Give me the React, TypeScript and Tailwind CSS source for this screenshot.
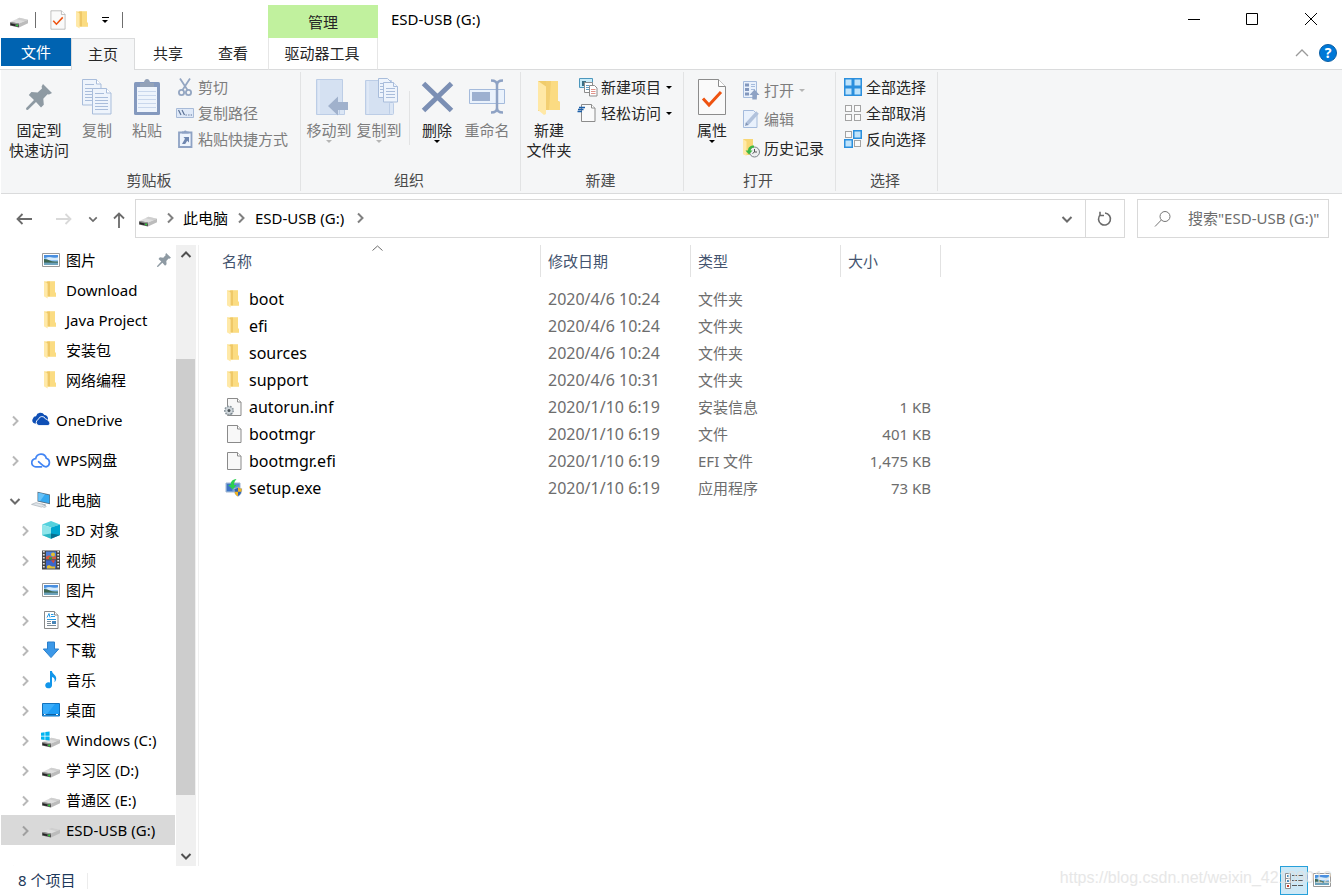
import type { ReactNode } from "react";

interface IconProps {
  className?: string;
}

/* ---------- drives, folders and files ---------- */

function DriveIcon({ windows = false }: { windows?: boolean }) {
  return (
    <svg className="w-[18px] h-[18px] shrink-0 overflow-visible" viewBox="0 0 18 18" aria-hidden="true">
      <path d="M0 11 9.500 6.800 18 8.800 9 12.600z" fill="#dedede" />
      <path d="M9.500 6.800 18 8.800l-3.500 1.500-8-2z" fill="#cfcfcf" />
      <path d="M0 11 9 12.600v4L0 14.400z" fill="#555" />
      <path d="M0 11 9 12.600v1L0 11.900z" fill="#9a9a9a" />
      <path d="M9 12.600 18 8.800v3.400L9 16.600z" fill="#bcbcbc" />
      <path d="M1 12.600 5 13.500v1.500l-4-1z" fill="#222" />
      <rect x="6.200" y="13.600" width="1.800" height="1.600" fill="#2fd13a" />
      {windows && (
        <path
          d="M-1 1.800 2.600 1.200v3.500H-1zM3.300 1.100 7.600.4v4.300H3.300zM-1 5.400h3.600v3.500L-1 8.400zM3.300 5.400h4.300v4.200L3.300 9z"
          fill="#00b4f0"
        />
      )}
    </svg>
  );
}

function FolderIcon({ className = "w-[18px] h-[18px]" }: IconProps) {
  return (
    <svg className={`${className} shrink-0`} viewBox="0 0 18 18" aria-hidden="true">
      <path d="M2 .5h11v11l1 .5v3.5H4L2 15z" fill="#f8d775" />
      <path d="M6 .5h7v11l1 .5v3.5H6z" fill="#fbdc82" />
      <path d="M5 .5h3v14.8H5z" fill="#efc867" />
      <path d="M2 .5 5.600 2.600v15L2 15.200z" fill="#ffe9a8" />
    </svg>
  );
}

function PictureIcon() {
  return (
    <svg className="w-[18px] h-[18px] shrink-0" viewBox="0 0 18 18" aria-hidden="true">
      <path d="M.5 2.500h17v13H.5z" fill="#fff" stroke="#9a9a9a" />
      <path d="M2 4h14v10H2z" fill="#8fc3f2" />
      <path d="M2 4h14v2.500C11 8 8 5 2 7z" fill="#4a8fe0" />
      <path d="M4 7c3-2 6 .5 12-.6V9H6z" fill="#d8ecfb" />
      <path d="M2 8c3 0 5 1.600 8 2.200 2 .3 4 .4 6 .4V12H2z" fill="#3d6650" />
      <path d="M2 11.600h14V14H2z" fill="#6da3bd" />
    </svg>
  );
}

function PageIcon({ gear = false }: { gear?: boolean }) {
  return (
    <svg className="w-[18px] h-[18px] shrink-0 overflow-visible" viewBox="0 0 18 18" aria-hidden="true">
      <path d="M2.500.5h10L16 4v13.500H2.500z" fill="#f8f8f8" stroke="#8a8a8a" />
      <path d="M12.500.5V4H16" fill="#fff" stroke="#8a8a8a" />
      {gear && (
        <g>
          <circle cx="4" cy="12.500" r="4.200" fill="#c3cbd0" stroke="#8b969d" strokeWidth="1.600" strokeDasharray="1.600 1.300" />
          <circle cx="4" cy="12.500" r="3" fill="#cfd6da" />
          <circle cx="4" cy="12.500" r="1.500" fill="#4d565c" />
          <path d="M5 16.500l2.500-1.500" stroke="#77828a" />
        </g>
      )}
    </svg>
  );
}

function SetupIcon() {
  return (
    <svg className="w-[18px] h-[18px] shrink-0" viewBox="0 0 18 18" aria-hidden="true">
      <path d="M1 4h14v9H1z" fill="#5b8fd6" stroke="#9fb4cf" />
      <path d="M2 5h5v7H2z" fill="#3f74c4" />
      <path d="M11.500 0C7 .5 5.500 3 5.800 6H3.200l4.600 4.500L11.500 6H9c0-2.500.8-4 2.500-6z" fill="#2bd14f" />
      <path d="M9 9.500c1.800 0 3-.6 4-1.500 1 .9 2.200 1.500 4 1.500 0 4-1 6.500-4 8-3-1.500-4-4-4-8z" fill="#2f62b0" stroke="#d7dde4" strokeWidth=".6" />
      <path d="M13 8.300c1 .9 2.100 1.300 3.700 1.400 0 1.100-.1 2.100-.4 3H13zM13 12.700v4.500c-2-1-3-2.500-3.400-4.500z" fill="#f3b51f" />
    </svg>
  );
}

/* ---------- navigation tree ---------- */

function OneDriveIcon() {
  return (
    <svg className="w-[18px] h-[18px] shrink-0" viewBox="0 0 18 18" aria-hidden="true">
      <path d="M3 12.500A3 3 0 0 1 1 7.600 3 3 0 0 1 4 5.200 4.600 4.600 0 0 1 12.400 4 4 4 0 0 1 16 7.500v5z" fill="#0f4fb5" />
      <path d="M7 14.600A3.200 3.200 0 0 1 6.400 8.400 3.700 3.700 0 0 1 13.500 8a2.800 2.800 0 0 1 2.700 1.800 2.500 2.500 0 0 1-.2 4.800z" fill="#0f4fb5" stroke="#fff" strokeWidth=".9" />
    </svg>
  );
}

function WpsCloudIcon() {
  return (
    <svg className="w-[20px] h-[18px] -mx-px shrink-0" viewBox="0 0 20 18" fill="none" stroke="#4285f4" strokeWidth="1.700" aria-hidden="true">
      <path d="M10.500 15.800H5A4.100 4.100 0 0 1 4.700 7.600 5.400 5.400 0 0 1 15.300 7.300a4.400 4.400 0 0 1-.3 8.500c-3.200 0-4.600-3-7.400-5.100" strokeLinecap="round" />
    </svg>
  );
}

function ComputerIcon() {
  return (
    <svg className="w-[20px] h-[18px] -mx-px shrink-0" viewBox="0 0 20 18" aria-hidden="true">
      <path d="M6.500.8 19 3.400v9.800L6.500 10.500z" fill="#5a6f80" />
      <path d="M7.300 1.800 18.300 4.200v8L7.300 9.800z" fill="#35a9f0" />
      <path d="M7.300 1.800 14 3.200 9 10.200 7.300 9.800z" fill="#68c2f7" />
      <path d="M10.500 12.500l4 .9v1.500l-4-.9z" fill="#8796a3" />
      <path d="M.5 13.400 5 11.600l9.500 2.500-4 2z" fill="#dfe4e8" stroke="#aab3ba" strokeWidth=".7" />
      <path d="M11.500 16.200l3-1.300 1.500.7-2.500 1.400z" fill="#c3cad0" />
    </svg>
  );
}

function CubeIcon() {
  return (
    <svg className="w-[18px] h-[18px] shrink-0" viewBox="0 0 18 18" aria-hidden="true">
      <path d="M9 0 18 3.500 9 6.500 0 3.500z" fill="#54d1dd" />
      <path d="M0 3.500 9 6.500V17.800L0 14z" fill="#8fe5ea" />
      <path d="M9 6.500 18 3.500V14L9 17.800z" fill="#00a6cf" />
      <path d="M9 12.500 0 14l9 3.800z" fill="#2bb6c4" />
      <path d="M9 12.500 18 14l-9 3.800z" fill="#056f91" />
    </svg>
  );
}

function VideoIcon() {
  return (
    <svg className="w-[18px] h-[20px] shrink-0" viewBox="0 0 18 20" aria-hidden="true">
      <path d="M0 .5h18v19H0z" fill="#444" />
      <path d="M1.800 1v18M16.200 1v18" stroke="#e4e4e4" strokeWidth="1.800" strokeDasharray="1.600 1.400" />
      <path d="M4 1.500h10v7.800H4z" fill="#4e7fd8" />
      <path d="M4 10.300h10v8.200H4z" fill="#3c66c9" />
      <path d="M4 6.800l3-1.500 3 2 4-1.300v3.300H4z" fill="#d65a3c" />
      <circle cx="11" cy="4.500" r="2" fill="#e5c12d" />
      <path d="M5 16l2-1 3 1.500h3v2H5z" fill="#e5c12d" />
      <path d="M9 10.300h4l-1.500 3z" fill="#d64a33" />
      <path d="M7 7.300h3v2H7z" fill="#2f9e44" />
    </svg>
  );
}

function DocumentIcon() {
  return (
    <svg className="w-[18px] h-[18px] shrink-0" viewBox="0 0 18 18" aria-hidden="true">
      <path d="M2.500.5h10L16 4v13.500H2.500z" fill="#fff" stroke="#8a8a8a" />
      <path d="M12.500.5V4H16" fill="#fff" stroke="#8a8a8a" />
      <path d="M5 6.500 7 2.500l1 4M9 3.500h2.500M9 5.500h4M5 8.500h9" stroke="#2499e6" fill="none" />
      <path d="M5 10.500h4M5 12.500h4M5 14.500h9" stroke="#7d8b96" />
      <path d="M10 10h4v3h-4z" fill="#4a86b8" />
    </svg>
  );
}

function DownloadIcon() {
  return (
    <svg className="w-[18px] h-[18px] shrink-0" viewBox="0 0 18 18" aria-hidden="true">
      <path d="M5.500 1h7v7h4.200L9 16.600 1.300 8h4.200z" fill="#3b98e8" stroke="#2a7fcb" />
    </svg>
  );
}

function MusicIcon() {
  return (
    <svg className="w-[18px] h-[18px] shrink-0" viewBox="0 0 18 18" aria-hidden="true">
      <path d="M8 0h2c0 3 4.800 4 4.200 8-.2 1.600-1 2.600-1.800 3.300.8-2.500.3-4.600-2.400-5.300v8.500a3.400 3 0 1 1-2-2.900z" fill="#1296ea" />
    </svg>
  );
}

function DesktopIcon() {
  return (
    <svg className="w-[18px] h-[18px] shrink-0" viewBox="0 0 18 18" aria-hidden="true">
      <path d="M.5 2.500h17V15H.5z" fill="#1e9df5" stroke="#1272bd" />
      <path d="M1 3h12L5 13H1z" fill="#3badfa" />
      <path d="M1 13.500h16" stroke="#0f5f9e" />
      <path d="M2 13.500h1.500M14 13.500h2" stroke="#fff" />
    </svg>
  );
}

function PinIcon({ className = "w-[14px] h-[14px]" }: IconProps) {
  return (
    <svg className={`${className} shrink-0`} viewBox="0 0 26 26" fill="#8e9aa3" aria-hidden="true">
      <path d="M17 0 26 9l-3 1.500-1.500-.3-4.200 4.600.5 6L15 23.500 10 18 1.800 26 0 25.500.2 24 8 16 2.800 11l2.600-3 6.200.6 4.400-4.200-.4-2z" />
    </svg>
  );
}

function Chevron({ dir, className = "" }: { dir: "right" | "down" | "up"; className?: string }) {
  const paths = {
    right: "M4 1.500 8.500 6 4 10.500",
    down: "M1.500 4 6 8.500 10.500 4",
    up: "M1.500 8 6 3.500 10.500 8",
  };
  return (
    <svg className={`w-3 h-3 shrink-0 ${className}`} viewBox="0 0 12 12" fill="none" stroke="currentColor" strokeWidth="2" aria-hidden="true">
      <path d={paths[dir]} />
    </svg>
  );
}

function Caret({ className = "" }: IconProps) {
  return (
    <svg className={`w-[6px] h-[3px] shrink-0 ${className}`} viewBox="0 0 6 3" fill="currentColor" aria-hidden="true">
      <path d="M0 0h6L3 3z" />
    </svg>
  );
}

/* ---------- ribbon ---------- */

function SheetLines({ x, y }: { x: number; y: number }) {
  return (
    <g transform={`translate(${x} ${y})`}>
      <path d="M.5.5h14L19 5v21H.5z" fill="#eef4fc" stroke="#a9bddb" />
      <path d="M14.500.5V5H19" fill="#fff" stroke="#a9bddb" />
      <path d="M3 5.500h9M3 9.500h13M3 12.500h13M3 15.500h13M3 18.500h13M3 21.500h13" stroke="#a9bddb" />
    </g>
  );
}

function CopyIcon() {
  return (
    <svg className="w-[32px] h-[38px]" viewBox="0 0 32 38" aria-hidden="true">
      <SheetLines x={1} y={1} />
      <SheetLines x={11} y={10} />
    </svg>
  );
}

function PasteIcon() {
  return (
    <svg className="w-[28px] h-[38px]" viewBox="0 0 28 38" aria-hidden="true">
      <rect x="1" y="4" width="26" height="33" rx="1.500" fill="#8499be" />
      <path d="M4 9h20v25H4z" fill="#eef4fc" />
      <path d="M5 13.500h18M5 17.500h18M5 21.500h18M5 25.500h18M5 29.500h18" stroke="#c9d7ec" />
      <path d="M7 9V5h4a3 3 0 0 1 6 0h4v4z" fill="#93a2b8" />
      <circle cx="14" cy="3.500" r="2.500" fill="#93a2b8" />
    </svg>
  );
}

function MoveToIcon() {
  return (
    <svg className="w-[38px] h-[38px]" viewBox="-4 0 38 38" aria-hidden="true">
      <path d="M2.500 1.500h26v35h-26z" fill="#d5e1f2" stroke="#bccde6" />
      <path d="M5 2v34" stroke="#e8effa" />
      <path d="M25.500 36.500V26h5v10.500z" fill="#dbe6f5" stroke="#bccde6" />
      <path d="M14 28 24 18.500V24h10v8H24v5.500z" fill="#a0b1cc" />
    </svg>
  );
}

function CopyToIcon() {
  return (
    <svg className="w-[40px] h-[38px]" viewBox="-6 0 40 38" aria-hidden="true">
      <path d="M.5 2.500h26v34H.5z" fill="#d5e1f2" stroke="#bccde6" />
      <path d="M3 3v33" stroke="#e8effa" />
      <rect x="24.500" y="24.500" width="4" height="12" rx="1" fill="#dbe6f5" stroke="#bccde6" />
      <g fill="#eef4fc" stroke="#a9bddb">
        <path d="M13.500.5h9l4 4v15h-13z" />
        <path d="M18.500 4.500h10l4 4V24h-14z" />
        <path d="M15 5.500h3M15 8.500h3M15 11.500h3M15 14.500h3M21 10.500h9M21 13.500h9M21 16.500h9M21 19.500h9M28.500 4.500v4h4" />
      </g>
    </svg>
  );
}

function DeleteIcon() {
  return (
    <svg className="w-[34px] h-[38px]" viewBox="0 0 34 38" aria-hidden="true">
      <path d="M3.500 5.500 31.500 32.500M31.500 5.500 3.500 32.500" stroke="#7b8fb4" strokeWidth="5" />
    </svg>
  );
}

function RenameIcon() {
  return (
    <svg className="w-[38px] h-[38px]" viewBox="0 0 38 38" aria-hidden="true">
      <path d="M1.500 11.500h35v14h-35z" fill="#eaf2fc" stroke="#a5bbdc" />
      <path d="M4 14h18v9H4z" fill="#9db0d0" />
      <path d="M23 2.500c4 0 6 1.500 6 4.500 0-3 2-4.500 6-4.500M29 6v24M23 34.500c4 0 6-1.500 6-4.500 0 3 2 4.500 6 4.500" fill="none" stroke="#8ea2c4" strokeWidth="2.500" />
    </svg>
  );
}

function PropertiesIcon({ className }: IconProps) {
  return (
    <svg className={className} viewBox="0 0 30 38" aria-hidden="true">
      <path d="M1.500 1.500h20l7 7v28h-27z" fill="#fafafa" stroke="#8c8c8c" />
      <path d="M21.500 1.500v7h7" fill="#fff" stroke="#8c8c8c" />
      <path d="M6 20.500 12 27 24 14" fill="none" stroke="#ee5311" strokeWidth="3" />
    </svg>
  );
}

function BigFolderIcon() {
  return (
    <svg className="w-[28px] h-[38px]" viewBox="0 0 28 38" aria-hidden="true">
      <path d="M3 3h20v20l2 1v8H9L3 33z" fill="#f0cc6c" />
      <path d="M11 3h12v20l2 1v8H11z" fill="#fbdb82" />
      <path d="M11 3h5l-2 29h-3z" fill="#f3cf72" />
      <path d="M3 3l8 5.500V36l-2 1-6-5z" fill="#ffe8a6" />
    </svg>
  );
}

function CutIcon() {
  return (
    <svg className="w-[18px] h-[20px]" viewBox="0 0 18 20" fill="none" stroke="#94a6c2" strokeWidth="1.800" aria-hidden="true">
      <path d="M4 1.500 11.500 13M14 1.500 6.500 13" />
      <circle cx="5.500" cy="15.500" r="2.600" />
      <circle cx="12.500" cy="15.500" r="2.600" />
    </svg>
  );
}

function CopyPathIcon() {
  return (
    <svg className="w-[18px] h-[18px]" viewBox="0 0 18 18" aria-hidden="true">
      <path d="M.5 4.500h17v9H.5z" fill="#dfe9f8" stroke="#a8bbd8" />
      <path d="M2.500 6l2.500 5M6 6l2.500 5M9.500 11h1.300M12.200 11h1.300M14.700 11H16" stroke="#5d7397" strokeWidth="1.200" />
    </svg>
  );
}

function PasteShortcutIcon() {
  return (
    <svg className="w-[18px] h-[20px]" viewBox="0 0 18 20" aria-hidden="true">
      <path d="M3 3.500h12.500V18H3z" fill="#eef4fc" stroke="#8ea2c4" strokeWidth="1.800" />
      <path d="M6 4.500V2.500h1.800a1.600 1.600 0 0 1 3 0h1.800v2z" fill="#8ea2c4" />
      <path d="M7.500 8H13v5.500l-1.800-1.800-2 3.300H6l3-5.200z" fill="#6f87b0" />
    </svg>
  );
}

function NewItemIcon() {
  return (
    <svg className="w-[20px] h-[20px]" viewBox="0 0 20 20" aria-hidden="true">
      <path d="M.5 1.500h13v9H.5z" fill="#c9ecf9" stroke="#4c97bd" />
      <path d="M3 4h4v5H3z" fill="#3a6f84" />
      <path d="M5.500 5.500h8v10h-8z" fill="#fff" stroke="#8c8c8c" />
      <path d="M7 8.500h3M7 10.500h3M7 12.500h3" stroke="#5f9fc6" />
      <path d="M10.500 8.500h5L18 11v8h-7.500z" fill="#fff" stroke="#8c8c8c" />
      <path d="M12 12.500h4.500M12 14.500h4.500M12 16.500h4.500" stroke="#e0938a" />
    </svg>
  );
}

function EasyAccessIcon() {
  return (
    <svg className="w-[20px] h-[20px] overflow-visible" viewBox="0 0 20 20" aria-hidden="true">
      <path d="M2.500 1.500h10L16 5v13.500H2.500z" fill="#fafafa" stroke="#8c8c8c" />
      <path d="M12.500 1.500V5H16" fill="#fff" stroke="#8c8c8c" />
      <path d="M0 4.500h6M-1 6.500h5.500M-1.500 8.500h4.500" stroke="#1d5fa8" strokeWidth="1.300" />
    </svg>
  );
}

function OpenIcon() {
  return (
    <svg className="w-[18px] h-[20px]" viewBox="0 0 18 20" aria-hidden="true">
      <path d="M1.500 1.500h13v16h-13z" fill="#e9f1fc" stroke="#a5bbdc" />
      <path d="M3 3.500h4v3H3zM3 8h4v3H3zM3 12.500h4v3H3z" fill="#8297bd" />
      <path d="M9 4.500h4M9 6.500h4M9 9.500h4" stroke="#a5bbdc" />
      <path d="M12.500 9.500 17.500 15h-2.700v4.500h-4.500V15H7.500z" fill="#8ea2c4" />
    </svg>
  );
}

function EditIcon() {
  return (
    <svg className="w-[18px] h-[20px]" viewBox="0 0 18 20" aria-hidden="true">
      <path d="M1.500 1.500h10L15 5v13.500H1.500z" fill="#e9f1fc" stroke="#a5bbdc" />
      <path d="M4.500 15.500 15.500 3.500" stroke="#b1c2dc" strokeWidth="3.500" />
      <path d="M3 17l1-3.500 2.300 2.200z" fill="#7f93b5" />
    </svg>
  );
}

function HistoryIcon() {
  return (
    <svg className="w-[18px] h-[20px]" viewBox="0 0 18 20" aria-hidden="true">
      <path d="M1 1h10v11l1 .5V17H4l-3-1z" fill="#f8d775" />
      <path d="M1 1l3.500 2.500V18L1 16z" fill="#ffe9a8" />
      <circle cx="12.500" cy="14" r="5" fill="#eceeef" stroke="#7b8288" />
      <path d="M12.500 11v3H15M12.500 14l-2 1.500" stroke="#555" fill="none" />
      <path d="M12 7.500C8 7.500 6 9.500 6 12.500H3.500L7 16.500l3.500-4h-2c0-2 1.500-3 3.500-3z" fill="#3cb844" />
    </svg>
  );
}

type SelectMode = "all" | "none" | "invert";

function SelectIcon({ mode }: { mode: SelectMode }) {
  const cells = [
    { x: 0, y: 0, on: mode === "all" },
    { x: 9, y: 0, on: mode !== "none" },
    { x: 0, y: 9, on: mode !== "none" },
    { x: 9, y: 9, on: mode === "all" },
  ];
  return (
    <svg className="w-[18px] h-[18px]" viewBox="0 0 18 18" aria-hidden="true">
      {cells.map(({ x, y, on }) =>
        on ? (
          <rect key={`${x}-${y}`} x={x + 0.75} y={y + 0.75} width="7.500" height="7.500" fill="#bfe3fb" stroke="#2b8fdd" strokeWidth="1.500" />
        ) : (
          <rect key={`${x}-${y}`} x={x + 1.5} y={y + 1.5} width="6" height="6" fill="#fafafa" stroke="#a3a3a3" />
        )
      )}
    </svg>
  );
}

interface RibbonButtonProps {
  icon: ReactNode;
  label: string;
  disabled?: boolean;
  caret?: boolean;
}

function LargeButton({ icon, label, disabled, caret, width = "w-[50px]" }: RibbonButtonProps & { width?: string }) {
  return (
    <button
      type="button"
      disabled={disabled}
      className={`${width} flex flex-col items-center text-[15px] leading-5 whitespace-pre-line ${disabled ? "text-[#7d7d7d]" : "text-[#262626]"}`}
    >
      <span className="h-[46px] flex items-center justify-center">{icon}</span>
      {label}
      {caret && <Caret className={disabled ? "text-[#b5b5b5]" : "text-black"} />}
    </button>
  );
}

function SmallButton({ icon, label, disabled, caret }: RibbonButtonProps) {
  return (
    <button
      type="button"
      disabled={disabled}
      className={`h-[26px] flex items-center text-[15px] leading-5 whitespace-nowrap ${disabled ? "text-[#7d7d7d]" : "text-[#262626]"}`}
    >
      <span className="w-[22px] flex items-center">{icon}</span>
      {label}
      {caret && <Caret className={`ml-[5px] ${disabled ? "text-[#b5b5b5]" : "text-black"}`} />}
    </button>
  );
}

function RibbonGroup({ title, className, children }: { title: string; className: string; children: ReactNode }) {
  return (
    <section aria-label={title} className={`${className} shrink-0 flex flex-col border-r border-[#e2e3e4] my-[2px]`}>
      <div className="flex-1 flex items-start pt-[2px]">{children}</div>
      <div className="h-[21px] pr-[3px] text-center text-[15px] leading-5 text-[#4a4a4a]">{title}</div>
    </section>
  );
}

/* ---------- data ---------- */

interface TreeItem {
  label: string;
  icon: ReactNode;
  level: 0 | 1;
  arrow?: "right" | "down";
  pinned?: boolean;
  selected?: boolean;
  spaced?: boolean;
}

const TREE: TreeItem[] = [
  { label: "图片", icon: <PictureIcon />, level: 1, pinned: true },
  { label: "Download", icon: <FolderIcon />, level: 1 },
  { label: "Java Project", icon: <FolderIcon />, level: 1 },
  { label: "安装包", icon: <FolderIcon />, level: 1 },
  { label: "网络编程", icon: <FolderIcon />, level: 1 },
  { label: "OneDrive", icon: <OneDriveIcon />, level: 0, arrow: "right", spaced: true },
  { label: "WPS网盘", icon: <WpsCloudIcon />, level: 0, arrow: "right", spaced: true },
  { label: "此电脑", icon: <ComputerIcon />, level: 0, arrow: "down", spaced: true },
  { label: "3D 对象", icon: <CubeIcon />, level: 1, arrow: "right" },
  { label: "视频", icon: <VideoIcon />, level: 1, arrow: "right" },
  { label: "图片", icon: <PictureIcon />, level: 1, arrow: "right" },
  { label: "文档", icon: <DocumentIcon />, level: 1, arrow: "right" },
  { label: "下载", icon: <DownloadIcon />, level: 1, arrow: "right" },
  { label: "音乐", icon: <MusicIcon />, level: 1, arrow: "right" },
  { label: "桌面", icon: <DesktopIcon />, level: 1, arrow: "right" },
  { label: "Windows (C:)", icon: <DriveIcon windows />, level: 1, arrow: "right" },
  { label: "学习区 (D:)", icon: <DriveIcon />, level: 1, arrow: "right" },
  { label: "普通区 (E:)", icon: <DriveIcon />, level: 1, arrow: "right" },
  { label: "ESD-USB (G:)", icon: <DriveIcon />, level: 1, arrow: "right", selected: true },
  { label: "ESD-USB (G:)", icon: <DriveIcon />, level: 0, arrow: "right", spaced: true },
];

const FILES = [
  { name: "boot", date: "2020/4/6 10:24", type: "文件夹", size: "", icon: <FolderIcon /> },
  { name: "efi", date: "2020/4/6 10:24", type: "文件夹", size: "", icon: <FolderIcon /> },
  { name: "sources", date: "2020/4/6 10:24", type: "文件夹", size: "", icon: <FolderIcon /> },
  { name: "support", date: "2020/4/6 10:31", type: "文件夹", size: "", icon: <FolderIcon /> },
  { name: "autorun.inf", date: "2020/1/10 6:19", type: "安装信息", size: "1 KB", icon: <PageIcon gear /> },
  { name: "bootmgr", date: "2020/1/10 6:19", type: "文件", size: "401 KB", icon: <PageIcon /> },
  { name: "bootmgr.efi", date: "2020/1/10 6:19", type: "EFI 文件", size: "1,475 KB", icon: <PageIcon /> },
  { name: "setup.exe", date: "2020/1/10 6:19", type: "应用程序", size: "73 KB", icon: <SetupIcon /> },
];

/* ---------- page parts ---------- */

function TitleBar() {
  return (
    <header className="flex h-[70px] shrink-0">
      <div className="w-[268px] shrink-0 flex flex-col">
        <div className="h-[38px] flex items-center pl-[10px] pt-px">
          <DriveIcon />
          <span className="w-px h-4 bg-[#6e6e6e] ml-[7px]" />
          <button type="button" aria-label="属性" className="ml-[14px]">
            <PropertiesIcon className="w-4 h-[20px]" />
          </button>
          <button type="button" aria-label="新建文件夹" className="ml-2">
            <FolderIcon />
          </button>
          <button type="button" aria-label="自定义快速访问工具栏" className="ml-[9px] w-2 flex flex-col items-center gap-[2px]">
            <span className="w-[7px] h-px bg-black" />
            <Caret />
          </button>
          <span className="w-px h-4 bg-[#6e6e6e] ml-[13px]" />
        </div>
        <nav className="flex-1 flex text-[15px] leading-5 text-[#262626]">
          <div className="w-[71px] pl-px border-b border-[#dadbdc]">
            <button type="button" className="w-full h-[28px] bg-[#0063b1] text-white">文件</button>
          </div>
          <button type="button" className="w-[64px] pb-[2px] bg-[#f5f6f7] border border-b-0 border-[#dadbdc]">主页</button>
          <button type="button" className="w-[66px] pb-px border-b border-[#dadbdc]">共享</button>
          <button type="button" className="flex-1 pr-[3px] pb-px border-b border-[#dadbdc]">查看</button>
        </nav>
      </div>

      <div className="w-[110px] shrink-0 flex flex-col pt-[5px] text-[15px] leading-5 text-[#262626]">
        <div className="h-[33px] flex items-center justify-center bg-[#c1f19e]">管理</div>
        <button type="button" className="flex-1 pr-[2px] pb-px border-x border-b border-x-[#e6e6e6] border-b-[#dadbdc]">驱动器工具</button>
      </div>

      <div className="flex-1 flex flex-col border-b border-[#dadbdc]">
        <div className="h-[38px] flex items-center pl-[13px] pr-px">
          <h1 className="flex-1 text-[15px] leading-5 text-black">ESD-USB (G:)</h1>
          <button type="button" aria-label="最小化" className="w-[58px] h-full flex items-center justify-center">
            <svg className="w-3 h-3" viewBox="0 0 12 12" stroke="#000"><path d="M0 6.500h12" /></svg>
          </button>
          <button type="button" aria-label="最大化" className="w-[58px] h-full flex items-center justify-center">
            <svg className="w-3 h-3" viewBox="0 0 12 12" fill="none" stroke="#000"><path d="M.5.5h11v11H.5z" /></svg>
          </button>
          <button type="button" aria-label="关闭" className="w-[60px] h-full flex items-center justify-center">
            <svg className="w-3 h-3" viewBox="0 0 12 12" stroke="#000"><path d="M0 0l12 12M12 0 0 12" /></svg>
          </button>
        </div>
        <div className="flex-1 flex items-center justify-end gap-[10px] pr-[5px] pb-[2px]">
          <button type="button" aria-label="最小化功能区">
            <svg className="w-[14px] h-2" viewBox="0 0 14 8" fill="none" stroke="#9a9a9a" strokeWidth="1.300"><path d="M1 7l6-6 6 6" /></svg>
          </button>
          <button type="button" aria-label="帮助" className="w-[18px] h-[18px] rounded-full bg-[#0078d7] border border-[#0b5fa5] text-white text-[14px] leading-4 font-bold">?</button>
        </div>
      </div>
    </header>
  );
}

function Ribbon() {
  return (
    <div className="h-[124px] shrink-0 flex bg-[#f5f6f7] border-b border-[#dadbdc] ml-px overflow-hidden">
      <RibbonGroup title="剪贴板" className="w-[300px]">
        <div className="flex pl-[3px]">
          <LargeButton icon={<PinIcon className="w-[26px] h-[26px]" />} label={"固定到\n快速访问"} width="w-[70px]" />
          <LargeButton icon={<CopyIcon />} label="复制" disabled width="w-[46px]" />
          <LargeButton icon={<PasteIcon />} label="粘贴" disabled width="w-[54px]" />
        </div>
        <div className="pl-[2px]">
          <SmallButton icon={<CutIcon />} label="剪切" disabled />
          <SmallButton icon={<CopyPathIcon />} label="复制路径" disabled />
          <SmallButton icon={<PasteShortcutIcon />} label="粘贴快捷方式" disabled />
        </div>
      </RibbonGroup>

      <RibbonGroup title="组织" className="w-[220px]">
        <div className="flex pl-[3px]">
          <LargeButton icon={<MoveToIcon />} label="移动到" disabled caret />
          <LargeButton icon={<CopyToIcon />} label="复制到" disabled caret />
          <span className="w-px h-[54px] mt-[17px] ml-[5px] mr-[2px] bg-[#e2e3e4]" />
          <LargeButton icon={<DeleteIcon />} label="删除" caret />
          <LargeButton icon={<RenameIcon />} label="重命名" disabled />
        </div>
      </RibbonGroup>

      <RibbonGroup title="新建" className="w-[163px]">
        <div className="flex pl-[3px]">
          <LargeButton icon={<BigFolderIcon />} label={"新建\n文件夹"} />
        </div>
        <div className="pl-[5px]">
          <SmallButton icon={<NewItemIcon />} label="新建项目" caret />
          <SmallButton icon={<EasyAccessIcon />} label="轻松访问" caret />
        </div>
      </RibbonGroup>

      <RibbonGroup title="打开" className="w-[152px]">
        <div className="flex pl-[3px]">
          <LargeButton icon={<PropertiesIcon className="w-[30px] h-[38px]" />} label="属性" caret />
        </div>
        <div className="pl-[5px] pt-[3px] flex flex-col gap-[3px]">
          <SmallButton icon={<OpenIcon />} label="打开" disabled caret />
          <SmallButton icon={<EditIcon />} label="编辑" disabled />
          <SmallButton icon={<HistoryIcon />} label="历史记录" />
        </div>
      </RibbonGroup>

      <RibbonGroup title="选择" className="w-[102px]">
        <div className="pl-2">
          <SmallButton icon={<SelectIcon mode="all" />} label="全部选择" />
          <SmallButton icon={<SelectIcon mode="none" />} label="全部取消" />
          <SmallButton icon={<SelectIcon mode="invert" />} label="反向选择" />
        </div>
      </RibbonGroup>
    </div>
  );
}

function AddressBar() {
  return (
    <div className="h-[51px] shrink-0 flex items-start pt-[5px] pr-[13px]">
      <div className="w-[135px] h-[39px] shrink-0 flex items-center pl-[16px] text-[#6b6b6b]">
        <button type="button" aria-label="后退">
          <svg className="w-4 h-3" viewBox="0 0 16 12" fill="none" stroke="currentColor" strokeWidth="1.800"><path d="M16 6H1.500M6.500 1l-5 5 5 5" /></svg>
        </button>
        <button type="button" aria-label="前进" className="ml-[24px] text-[#d9d9d9]">
          <svg className="w-4 h-3" viewBox="0 0 16 12" fill="none" stroke="currentColor" strokeWidth="1.800"><path d="M0 6h14.500M9.500 1l5 5-5 5" /></svg>
        </button>
        <button type="button" aria-label="最近浏览的位置" className="ml-[16px]">
          <Chevron dir="down" className="w-[10px] h-[10px]" />
        </button>
        <button type="button" aria-label="上移" className="ml-[15px] pt-[2px]">
          <svg className="w-3 h-4" viewBox="0 0 12 16" fill="none" stroke="currentColor" strokeWidth="1.800"><path d="M6 16V1.500M1 6.500l5-5 5 5" /></svg>
        </button>
      </div>

      <div className="flex-1 h-[39px] flex border border-[#d9d9d9]">
        <div className="flex-1 flex items-center pl-[3px] pb-[2px] text-[15px] leading-5 text-black">
          <span className="pt-[2px]"><DriveIcon /></span>
          <Chevron dir="right" className="ml-[7px] text-[#808080]" />
          <button type="button" className="ml-[7px]">此电脑</button>
          <Chevron dir="right" className="ml-[7px] text-[#808080]" />
          <button type="button" className="ml-2">ESD-USB (G:)</button>
          <Chevron dir="right" className="ml-[10px] text-[#808080]" />
        </div>
        <button type="button" aria-label="以前的位置" className="w-[36px] flex items-center justify-center text-[#6b6b6b]">
          <Chevron dir="down" />
        </button>
        <button type="button" aria-label="刷新" className="w-[39px] flex items-center justify-center border-l border-[#d9d9d9]">
          <svg className="w-4 h-4" viewBox="0 0 16 16" fill="none" stroke="#6b6b6b" strokeWidth="1.600"><path d="M3.500 3.500A6 6 0 1 0 8 2M3 .8V4.500h4" /></svg>
        </button>
      </div>

      <div className="w-[192px] h-[39px] ml-3 shrink-0 flex items-center border border-[#d9d9d9] pl-[16px]">
        <svg className="w-[18px] h-[18px] shrink-0" viewBox="0 0 18 18" fill="none" stroke="#767676" aria-hidden="true">
          <circle cx="11" cy="6.500" r="5" />
          <path d="M7.300 10 1 16.500" />
        </svg>
        <input
          type="text"
          aria-label="搜索"
          placeholder={'搜索"ESD-USB (G:)"'}
          className="flex-1 min-w-0 ml-4 pb-[2px] text-[15px] leading-5 outline-none placeholder:text-[#6d6d6d]"
        />
      </div>
    </div>
  );
}

function TreeRow({ item }: { item: TreeItem }) {
  return (
    <li className={item.spaced ? "mt-[10px]" : ""}>
      <button
        type="button"
        className={`w-full h-[30px] flex items-center text-[15px] leading-5 text-black whitespace-nowrap ${item.level === 0 ? "pl-2" : "pl-[18px]"} ${item.selected ? "bg-[#d9d9d9]" : ""}`}
      >
        <span className="w-[23px] shrink-0 flex items-center pt-px">
          {item.arrow && (
            <Chevron
              dir={item.arrow}
              className={item.arrow === "down" ? "text-[#6b6b6b]" : item.selected ? "text-[#a0a0a0]" : "text-[#b8b8b8]"}
            />
          )}
        </span>
        {item.icon}
        <span className="ml-[6px]">{item.label}</span>
        {item.pinned && (
          <span className="flex-1 flex justify-end pr-1">
            <PinIcon />
          </span>
        )}
      </button>
    </li>
  );
}

function Sidebar() {
  return (
    <aside className="w-[199px] shrink-0 flex border-r border-[#f0f0f0]">
      <ul className="w-[174px] mx-px shrink-0 overflow-hidden">
        {TREE.map((item, i) => (
          <TreeRow key={i} item={item} />
        ))}
      </ul>
      <div className="w-5 shrink-0 flex flex-col items-center bg-[#f0f0f0] text-[#505050]">
        <span className="h-5 flex items-center"><Chevron dir="up" /></span>
        <span className="grow-94" />
        <span className="w-[19px] self-start grow-436 bg-[#cdcdcd]" />
        <span className="grow-51" />
        <span className="h-5 flex items-center"><Chevron dir="down" /></span>
      </div>
    </aside>
  );
}

function FileTable() {
  return (
    <main className="flex-1 min-w-0 pl-px">
      <table className="w-[741px] table-fixed text-left text-[15px] leading-5">
        <colgroup>
          <col className="w-[341px]" />
          <col className="w-[150px]" />
          <col className="w-[150px]" />
          <col className="w-[100px]" />
        </colgroup>
        <thead className="text-[#44546f]">
          <tr className="h-10 align-top">
            <th className="p-0 font-normal">
              <div className="relative h-8 flex items-center pl-[22px] border-r border-[#e2e2e2]">
                名称
                <svg className="absolute left-[172px] top-0 w-[11px] h-[6px]" viewBox="0 0 11 6" fill="none" stroke="#6b6b6b"><path d="M.5 5.500l5-4.500 5 4.500" /></svg>
              </div>
            </th>
            <th className="p-0 font-normal">
              <div className="h-8 flex items-center pl-[7px] border-r border-[#e2e2e2]">修改日期</div>
            </th>
            <th className="p-0 font-normal">
              <div className="h-8 flex items-center pl-[7px] border-r border-[#e2e2e2]">类型</div>
            </th>
            <th className="p-0 font-normal">
              <div className="h-8 flex items-center pl-[7px] border-r border-[#e2e2e2]">大小</div>
            </th>
          </tr>
        </thead>
        <tbody className="text-[#6d6d6d]">
          {FILES.map((f) => (
            <tr key={f.name} className="h-[27px]">
              <td className="p-0 pl-[25px] text-[16px] text-black">
                <span className="flex items-center gap-[6px]">
                  {f.icon}
                  {f.name}
                </span>
              </td>
              <td className="p-0 pl-[7px] text-[16px]">{f.date}</td>
              <td className="p-0 pl-[7px]">{f.type}</td>
              <td className="p-0 pr-[10px] text-right">{f.size}</td>
            </tr>
          ))}
        </tbody>
      </table>
    </main>
  );
}

function StatusBar() {
  return (
    <footer className="relative h-[30px] shrink-0 flex items-start pl-[18px] pr-[11px]">
      <span className="mt-1 text-[15px] leading-5 text-[#1e395b]">8 个项目</span>
      <span className="w-px h-4 mt-[7px] ml-3 bg-[#ececec]" />
      <span className="flex-1" />
      <button type="button" aria-label="详细信息" className="w-7 h-[29px] flex items-center justify-center bg-[#cce8f6] border border-[#26a0da]">
        <svg className="w-[18px] h-[18px]" viewBox="0 0 18 18" aria-hidden="true">
          <path d="M.5 1.500h5v15h-5z" fill="#fff" stroke="#8f8f8f" />
          <path d="M1 6.500h4M1 11.500h4" stroke="#8f8f8f" />
          <path d="M2 3h2v2H2z" fill="#4d86b5" />
          <path d="M2 8h2v2H2z" fill="#4d86b5" />
          <path d="M2 13h2v2H2z" fill="#c43b2d" />
          <path d="M7 3.500h5M13 3.500h5M7 8.500h5M13 8.500h5M7 13.500h5M13 13.500h5" stroke="#5a5a5a" />
        </svg>
      </button>
      <button type="button" aria-label="大图标" className="ml-[5px] mt-[5px]">
        <PictureIcon />
      </button>
      <span className="absolute right-[10px] top-[2px] font-['Liberation_Sans',sans-serif] text-[16px] leading-5 text-[#e2e2e2] opacity-80 pointer-events-none">
        https://blog.csdn.net/weixin_42109012
      </span>
    </footer>
  );
}

export default function App() {
  return (
    <div className="h-screen flex flex-col bg-white overflow-hidden font-['Noto_Sans','Noto_Sans_CJK_SC',sans-serif]">
      <TitleBar />
      <Ribbon />
      <AddressBar />
      <div className="flex-1 min-h-0 flex">
        <Sidebar />
        <FileTable />
      </div>
      <StatusBar />
    </div>
  );
}
